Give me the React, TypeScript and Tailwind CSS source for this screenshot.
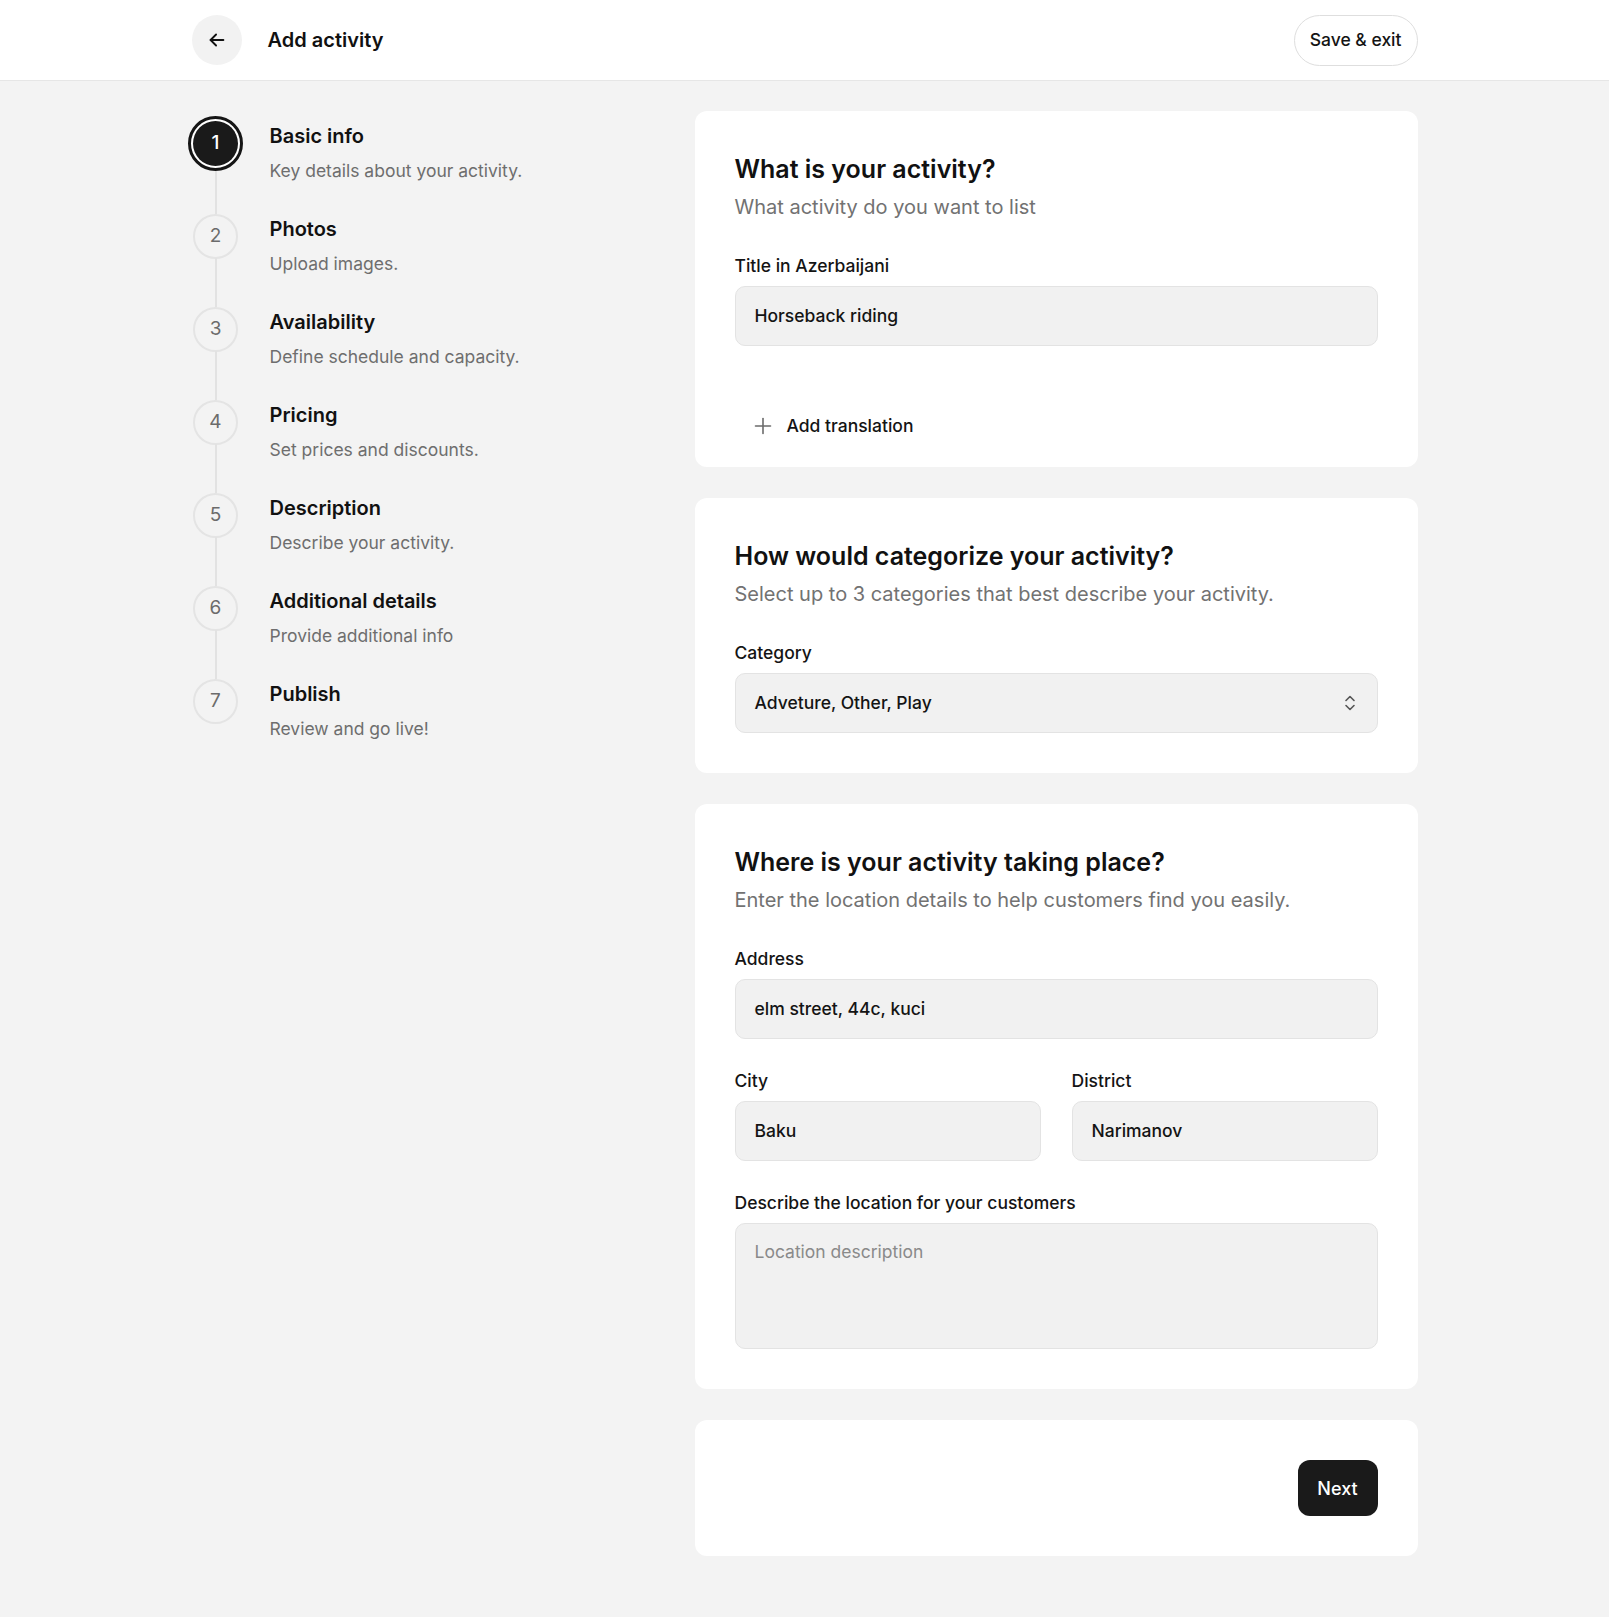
import React from "react";

const steps = [
  { n: 1, title: "Basic info", sub: "Key details about your activity." },
  { n: 2, title: "Photos", sub: "Upload images." },
  { n: 3, title: "Availability", sub: "Define schedule and capacity." },
  { n: 4, title: "Pricing", sub: "Set prices and discounts." },
  { n: 5, title: "Description", sub: "Describe your activity." },
  { n: 6, title: "Additional details", sub: "Provide additional info" },
  { n: 7, title: "Publish", sub: "Review and go live!" },
];

function Stepper() {
  return (
    <div className="flex flex-col pt-[4px]">
      {steps.map((s, i) => {
        const active = i === 0;
        const last = i === steps.length - 1;
        return (
          <div key={s.n} className="flex gap-[26px] h-[93px]">
            <div className="flex w-[56px] flex-col items-center">
              <div className="flex h-[56px] w-[56px] shrink-0 items-center justify-center">
                {active ? (
                  <div className="flex h-[55px] w-[55px] items-center justify-center rounded-full border-[3px] border-[#151515] bg-white">
                    <div className="flex h-[45px] w-[45px] items-center justify-center rounded-full bg-[#1a1a1a] text-[19px] font-medium text-white">
                      {s.n}
                    </div>
                  </div>
                ) : (
                  <div className="flex h-[45px] w-[45px] items-center justify-center rounded-full border-2 border-[#e4e4e4] text-[19px] text-[#6b6b6b]">
                    {s.n}
                  </div>
                )}
              </div>
              {!last && (
                <div className={`w-[2px] flex-1 bg-[#e2e2e2] ${active ? "-mb-[6px]" : "-my-[6px]"}`} />
              )}
            </div>
            <div className="flex flex-col pt-[7px]">
              <div className="text-[20px] font-semibold leading-[28px] text-[#111111]">{s.title}</div>
              <div className="mt-[9px] text-[17.5px] leading-[24px] text-[#6e6e6e]">{s.sub}</div>
            </div>
          </div>
        );
      })}
    </div>
  );
}

function Card({ children, className = "" }: { children: React.ReactNode; className?: string }) {
  return <div className={`rounded-[12px] bg-white px-10 pt-10 ${className}`}>{children}</div>;
}

function CardHead({ title, sub }: { title: string; sub: string }) {
  return (
    <div>
      <h2 className="text-[25px] font-semibold leading-[36px] text-[#111111]">{title}</h2>
      <p className="mt-[6px] text-[20px] leading-[28px] text-[#727272]">{sub}</p>
    </div>
  );
}

function Label({ children }: { children: React.ReactNode }) {
  return <div className="text-[17.5px] font-medium leading-[24px] text-[#141414]">{children}</div>;
}

function Field({ value }: { value: string }) {
  return (
    <div className="mt-[8px] flex h-[60px] items-center rounded-[10px] border border-[#e3e3e3] bg-[#f1f1f1] px-[19px] text-[17.5px] font-medium text-[#141414]">
      {value}
    </div>
  );
}

export default function App() {
  return (
    <div className="min-h-[1617px] bg-[#f3f3f3]" style={{ fontFamily: "Inter, 'Noto Sans', sans-serif" }}>
      <header className="h-[81px] border-b border-[#e6e6e6] bg-white">
        <div className="mx-auto flex h-full w-[1226px] items-center justify-between">
          <div className="flex items-center gap-[26px]">
            <button className="flex h-[50px] w-[50px] items-center justify-center rounded-full bg-[#f2f2f2]">
              <svg width="22" height="22" viewBox="0 0 24 24" fill="none" stroke="#111" strokeWidth="2" strokeLinecap="round" strokeLinejoin="round">
                <path d="M19 12H5" />
                <path d="M11 6l-6 6 6 6" />
              </svg>
            </button>
            <div className="text-[20px] font-semibold text-[#111111]">Add activity</div>
          </div>
          <button className="h-[51px] rounded-full border border-[#dedede] bg-white px-[15px] text-[17.5px] font-medium text-[#141414]">
            Save &amp; exit
          </button>
        </div>
      </header>

      <main className="mx-auto flex w-[1226px] gap-[53px] pt-[30px] pb-[62px]">
        <div className="w-[450px] shrink-0">
          <div className="-ml-[4px]">
            <Stepper />
          </div>
        </div>

        <div className="flex w-[723px] flex-col gap-[31px]">
          <Card className="pb-[21px]">
            <CardHead title="What is your activity?" sub="What activity do you want to list" />
            <div className="mt-[33px]">
              <Label>Title in Azerbaijani</Label>
              <Field value="Horseback riding" />
            </div>
            <button className="mt-[60px] flex h-[40px] items-center gap-[15px] px-[19px] text-[17.5px] font-medium text-[#141414]">
              <svg width="18" height="18" viewBox="0 0 18 18" fill="none" stroke="#6b6b6b" strokeWidth="1.6" strokeLinecap="round">
                <path d="M9 1.5v15" />
                <path d="M1.5 9h15" />
              </svg>
              Add translation
            </button>
          </Card>

          <Card className="pb-10">
            <CardHead title="How would categorize your activity?" sub="Select up to 3 categories that best describe your activity." />
            <div className="mt-[33px]">
              <Label>Category</Label>
              <div className="mt-[8px] flex h-[60px] items-center justify-between rounded-[10px] border border-[#e3e3e3] bg-[#f1f1f1] px-[19px] text-[17.5px] font-medium text-[#141414]">
                <span>Adveture, Other, Play</span>
                <svg width="16" height="18" viewBox="0 0 16 18" fill="none" stroke="#555" strokeWidth="1.6" strokeLinecap="round" strokeLinejoin="round">
                  <path d="M4 6.5l4-4 4 4" />
                  <path d="M4 11.5l4 4 4-4" />
                </svg>
              </div>
            </div>
          </Card>

          <Card className="pb-10">
            <CardHead title="Where is your activity taking place?" sub="Enter the location details to help customers find you easily." />
            <div className="mt-[33px]">
              <Label>Address</Label>
              <Field value="elm street, 44c, kuci" />
            </div>
            <div className="mt-[30px] grid grid-cols-2 gap-[31px]">
              <div>
                <Label>City</Label>
                <Field value="Baku" />
              </div>
              <div>
                <Label>District</Label>
                <Field value="Narimanov" />
              </div>
            </div>
            <div className="mt-[30px]">
              <Label>Describe the location for your customers</Label>
              <div className="mt-[8px] h-[126px] rounded-[10px] border border-[#e3e3e3] bg-[#f1f1f1] px-[19px] pt-[16px] text-[17.5px] leading-[24px] text-[#8a8a8a]">
                Location description
              </div>
            </div>
          </Card>

          <Card className="flex justify-end pb-10">
            <button className="h-[56px] w-[80px] rounded-[12px] bg-[#1a1a1a] text-[18px] font-medium text-white">
              Next
            </button>
          </Card>
        </div>
      </main>
    </div>
  );
}
